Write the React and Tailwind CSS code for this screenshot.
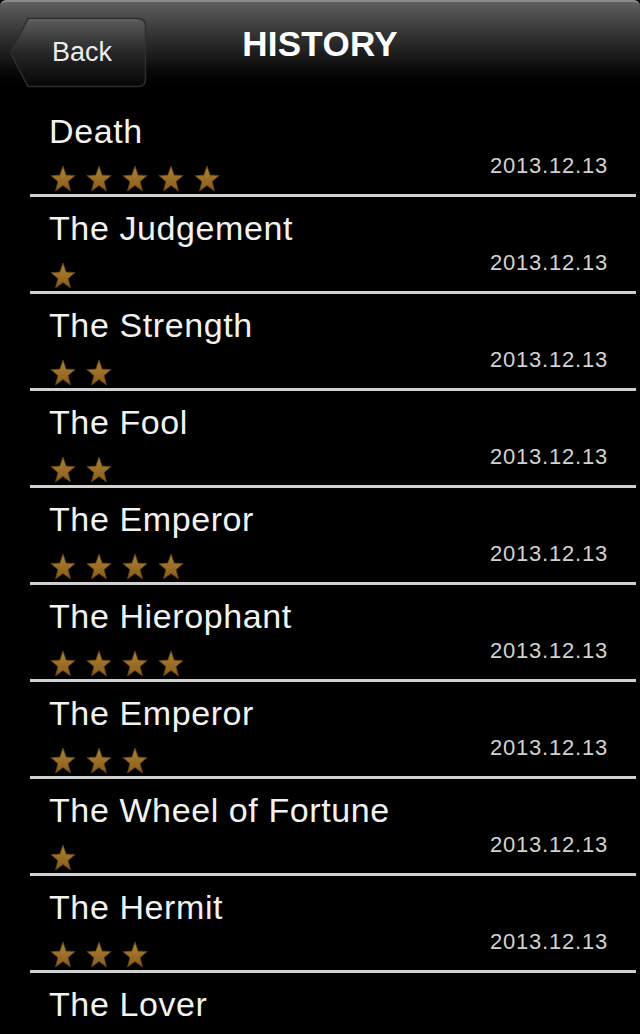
import React from "react";

const entries = [
  { name: "Death", stars: 5, date: "2013.12.13" },
  { name: "The Judgement", stars: 1, date: "2013.12.13" },
  { name: "The Strength", stars: 2, date: "2013.12.13" },
  { name: "The Fool", stars: 2, date: "2013.12.13" },
  { name: "The Emperor", stars: 4, date: "2013.12.13" },
  { name: "The Hierophant", stars: 4, date: "2013.12.13" },
  { name: "The Emperor", stars: 3, date: "2013.12.13" },
  { name: "The Wheel of Fortune", stars: 1, date: "2013.12.13" },
  { name: "The Hermit", stars: 3, date: "2013.12.13" },
  { name: "The Lover", stars: 2, date: null },
];

const Star = () => (
  <svg width="26" height="27" viewBox="0 0 26 27">
    <defs>
      <linearGradient id="starFill" x1="0" y1="0" x2="0" y2="1">
        <stop offset="0" stopColor="#ad8432" />
        <stop offset="1" stopColor="#8a5b1c" />
      </linearGradient>
    </defs>
    <polygon
      points="13,1 16.16,10.11 25.17,10.54 18.11,16.59 20.53,25.96 13,20.6 5.47,25.96 7.89,16.59 0.83,10.54 9.84,10.11"
      fill="url(#starFill)"
      stroke="#5e3f12"
      strokeWidth="0.8"
      strokeLinejoin="round"
    />
  </svg>
);

const BackButton = () => (
  <button className="relative w-[138px] h-[72px] ml-[9px] mt-[15px] flex items-center justify-center pl-[8px] pb-[1px]">
    <svg
      className="absolute inset-0"
      width="138"
      height="72"
      viewBox="0 0 138 72"
    >
      <defs>
        <linearGradient id="backFill" x1="0" y1="0" x2="0" y2="1">
          <stop offset="0" stopColor="#5c5c5c" />
          <stop offset="0.5" stopColor="#272727" />
          <stop offset="1" stopColor="#060606" />
        </linearGradient>
      </defs>
      <path
        d="M19,1.5 L129,1.5 Q136.5,1.5 136.5,9 L136.5,62 Q136.5,69.5 129,69.5 L19,69.5 L1.5,36 Z"
        fill="url(#backFill)"
        stroke="#2e2e2e"
        strokeWidth="1.5"
        strokeLinejoin="round"
      />
      <path
        d="M20,3 L128,3"
        stroke="#777777"
        strokeWidth="1"
        opacity="0.6"
      />
    </svg>
    <span className="relative text-[27px] leading-none text-[#ececec]">
      Back
    </span>
  </button>
);

export default function App() {
  return (
    <div className="w-[640px] h-[1034px] overflow-hidden bg-black font-['Liberation_Sans',Arial,sans-serif]">
      {/* Nav bar */}
      <div className="relative h-[100px] rounded-t-[6px] border-t-2 border-[#8c8c8c] bg-gradient-to-b from-[#5f5f5f] to-black">
        <BackButton />
        <div className="absolute left-0 right-0 top-[22px] text-center text-[35px] leading-[40px] font-bold tracking-[0.3px] text-white">
          HISTORY
        </div>
      </div>

      {/* History list */}
      <div className="ml-[30px] mr-[4px]">
        {entries.map((e, i) => (
          <div
            key={i}
            className="h-[97px] border-b-[3px] border-[#d0d0d0] flex justify-between pl-[19px] pr-[28px]"
          >
            <div className="flex flex-col">
              <div className="pt-[14px] text-[34px] leading-[34px] tracking-[0.6px] text-[#f2f2f2]">
                {e.name}
              </div>
              <div className="mt-[17px] flex gap-[10px] pl-[1px]">
                {Array.from({ length: e.stars }).map((_, s) => (
                  <Star key={s} />
                ))}
              </div>
            </div>
            {e.date && (
              <div className="mt-[55px] text-[22px] leading-[22px] tracking-[0.8px] text-[#d2d2d2]">
                {e.date}
              </div>
            )}
          </div>
        ))}
      </div>
    </div>
  );
}
